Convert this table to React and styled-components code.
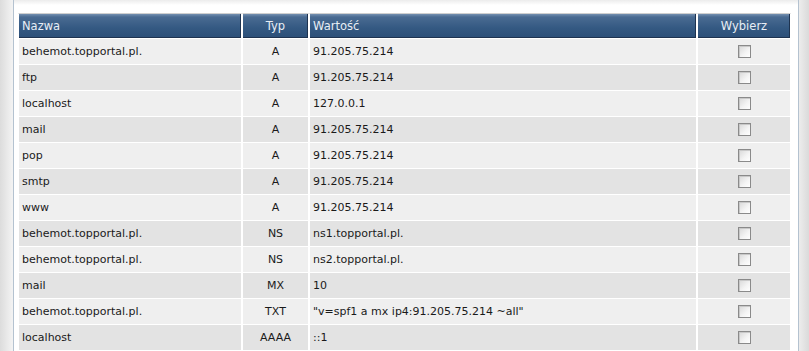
import React from 'react';
import styled, { createGlobalStyle } from 'styled-components';

const GlobalStyle = createGlobalStyle`
  html, body {
    margin: 0;
    padding: 0;
  }
  body {
    width: 809px;
    height: 351px;
    overflow: hidden;
    background: linear-gradient(to right, #dcdcdc 0px, #f2f2f2 12px, #f2f2f2 796px, #dadada 809px);
    font-family: Verdana, "DejaVu Sans", sans-serif;
  }
`;

const records = [
  { name: 'behemot.topportal.pl.', type: 'A', value: '91.205.75.214' },
  { name: 'ftp', type: 'A', value: '91.205.75.214' },
  { name: 'localhost', type: 'A', value: '127.0.0.1' },
  { name: 'mail', type: 'A', value: '91.205.75.214' },
  { name: 'pop', type: 'A', value: '91.205.75.214' },
  { name: 'smtp', type: 'A', value: '91.205.75.214' },
  { name: 'www', type: 'A', value: '91.205.75.214' },
  { name: 'behemot.topportal.pl.', type: 'NS', value: 'ns1.topportal.pl.' },
  { name: 'behemot.topportal.pl.', type: 'NS', value: 'ns2.topportal.pl.' },
  { name: 'mail', type: 'MX', value: '10' },
  { name: 'behemot.topportal.pl.', type: 'TXT', value: '"v=spf1 a mx ip4:91.205.75.214 ~all"' },
  { name: 'localhost', type: 'AAAA', value: '::1' },
];

const Page = styled.div`
  padding-left: 13px;
`;

const Panel = styled.div`
  width: 777px;
  height: 351px;
  border-left: 1px solid #b4c2d0;
  border-right: 1px solid #b4c2d0;
  background: linear-gradient(to bottom, #ececec 0px, #ffffff 5px);
  box-sizing: content-box;
  padding: 13px 3px 0 4px;
`;

const Table = styled.table`
  border-collapse: separate;
  border-spacing: 0;
  width: 773px;
  table-layout: fixed;
  font-size: 11px;
  color: #1a1a1a;
`;

const HeadCell = styled.th`
  height: 24px;
  padding: 0 3px;
  font-size: 11.5px;
  font-weight: normal;
  color: #e8eef5;
  text-align: ${(p) => p.align || 'left'};
  background: linear-gradient(to bottom, #7490b0 0px, #4a6b92 3px, #345982 14px, #2c4f78 24px);
  box-shadow: inset -1px -1px 0 #1e3350;
  border: 1px solid #ffffff;
  border-top-color: #cfcfcf;
`;

const Row = styled.tr`
  background: ${(p) => (p.odd ? '#e3e3e3' : '#efefef')};
`;

const Cell = styled.td`
  height: 25px;
  padding: 0 3px;
  text-align: ${(p) => p.align || 'left'};
  border-bottom: 1px solid #ffffff;
  border-left: 1px solid #ffffff;
  border-right: 1px solid #ffffff;
  white-space: nowrap;
`;

const Check = styled.span`
  display: inline-block;
  width: 11px;
  height: 11px;
  vertical-align: middle;
  border: 1px solid #8a8a8a;
  background: linear-gradient(135deg, #d8d8d8 0%, #f4f4f4 60%, #ffffff 100%);
  box-shadow: inset 1px 1px 0 #c8c8c8;
`;

export default function App() {
  return (
    <>
      <GlobalStyle />
      <Page>
        <Panel>
          <Table>
            <colgroup>
              <col style={{ width: 224 }} />
              <col style={{ width: 67 }} />
              <col style={{ width: 388 }} />
              <col style={{ width: 94 }} />
            </colgroup>
            <thead>
              <tr>
                <HeadCell>Nazwa</HeadCell>
                <HeadCell align="center">Typ</HeadCell>
                <HeadCell>Wartość</HeadCell>
                <HeadCell align="center">Wybierz</HeadCell>
              </tr>
            </thead>
            <tbody>
              {records.map((r, i) => (
                <Row key={i} odd={i % 2 === 1}>
                  <Cell>{r.name}</Cell>
                  <Cell align="center">{r.type}</Cell>
                  <Cell>{r.value}</Cell>
                  <Cell align="center">
                    <Check />
                  </Cell>
                </Row>
              ))}
            </tbody>
          </Table>
        </Panel>
      </Page>
    </>
  );
}
